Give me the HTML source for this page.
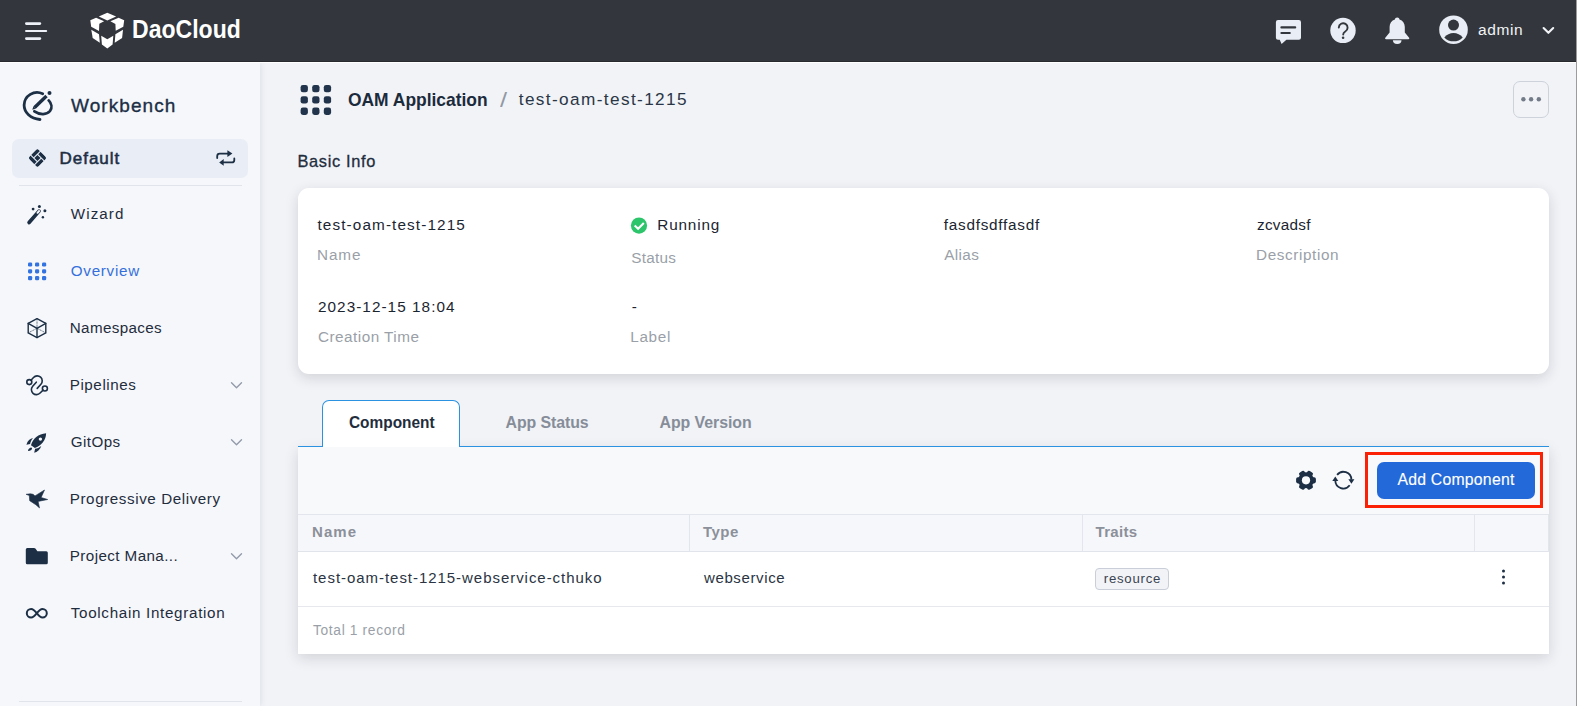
<!DOCTYPE html>
<html lang="en">
<head>
<meta charset="utf-8">
<title>OAM Application - test-oam-test-1215</title>
<style>
*{box-sizing:border-box;margin:0;padding:0}
html,body{width:1577px;height:706px;overflow:hidden;background:#f1f3f7;font-family:"Liberation Sans",sans-serif;color:#1f2d3d}
.a{position:absolute}
.t{position:absolute;white-space:nowrap;line-height:1;z-index:5}
svg{position:absolute;left:0;top:0;overflow:visible;z-index:4}
#topbar{left:0;top:0;width:1577px;height:62px;background:#33363c;border-bottom:1px solid #27292e;z-index:3}
#topline{left:0;top:62px;width:1577px;height:1px;background:#fff;z-index:3}
#sidebar{left:0;top:63px;width:260px;height:643px;background:#f6f7fb;box-shadow:1px 0 6px rgba(50,60,80,.10);z-index:2}
#main{left:260px;top:61px;width:1317px;height:645px;background:#f1f3f7;z-index:1}
#edge{left:1576px;top:0;width:1px;height:706px;background:#9c9c9e;z-index:9}
#defbox{left:12px;top:139px;width:236px;height:39px;border-radius:7px;background:#e9edf5;z-index:3}
.hr{height:1px;background:#e1e4ea;left:19px;width:223px;z-index:3}
#more{left:1513px;top:81px;width:36px;height:37px;border:1px solid #cdd2db;border-radius:7px;background:#f1f3f7;z-index:3}
#card{left:298px;top:188px;width:1251px;height:186px;border-radius:11px;background:#fff;box-shadow:0 4px 13px rgba(25,30,40,.15);z-index:2}
#panel{left:298px;top:447px;width:1251px;height:207px;background:#fff;box-shadow:0 4px 13px rgba(25,30,40,.15);z-index:2}
#toolbar{left:298px;top:447px;width:1251px;height:67px;background:#f8f9fb;z-index:3}
#thead{left:298px;top:514px;width:1251px;height:38px;background:#f6f7fa;border-top:1px solid #e3e6ec;border-bottom:1px solid #e1e4ea;border-right:1px solid #e3e6ec;z-index:3}
.vd{top:515px;width:1px;height:36px;background:#e3e6ec;z-index:4}
#rowline{left:298px;top:606px;width:1251px;height:1px;background:#e6e8ed;z-index:3}
#tabline{left:298px;top:446px;width:1251px;height:1px;background:#2a92e1;z-index:3}
#tab{left:322px;top:400px;width:138px;height:47px;border:1px solid #2a92e1;border-bottom:none;border-radius:7px 7px 0 0;background:#fff;z-index:4}
#redbox{left:1365px;top:452px;width:178px;height:56px;border:3px solid #fb2104;z-index:4}
#btn{left:1377px;top:462px;width:158px;height:37px;border-radius:7px;background:#2369d9;z-index:4}
#tagbox{left:1095px;top:568px;width:74px;height:22px;border:1px solid #c9ced8;border-radius:4px;background:#f1f3f7;z-index:3}
</style>
</head>
<body>
<div class="a" id="main"></div>
<div class="a" id="sidebar"></div>
<div class="a" id="topbar"></div>
<div class="a" id="topline"></div>
<div class="a" id="edge"></div>

<div class="a" id="defbox"></div>
<div class="a hr" style="top:185px"></div>
<div class="a hr" style="top:701px"></div>

<div class="a" id="more"></div>
<div class="a" id="card"></div>
<div class="a" id="panel"></div>
<div class="a" id="toolbar"></div>
<div class="a" id="thead"></div>
<div class="a vd" style="left:689px"></div>
<div class="a vd" style="left:1082px"></div>
<div class="a vd" style="left:1474px"></div>
<div class="a" id="rowline"></div>
<div class="a" id="tabline"></div>
<div class="a" id="tab"></div>
<div class="a" id="redbox"></div>
<div class="a" id="btn"></div>
<div class="a" id="tagbox"></div>

<span class="t" id="t-logo" style="left:132.90px;top:16.02px;font-size:26px;color:#ffffff;transform-origin:0 0;transform:translateX(-0.89px) scaleX(0.8852);font-weight:bold;">DaoCloud</span>
<span class="t" id="t-admin" style="left:1477.90px;top:21.77px;font-size:15.5px;color:#f1f3f7;letter-spacing:0.626px;">admin</span>
<span class="t" id="t-wb" style="left:71.03px;top:96.02px;font-size:19px;color:#1c2f45;letter-spacing:1.063px;-webkit-text-stroke:0.35px #1c2f45;">Workbench</span>
<span class="t" id="t-def" style="left:59.44px;top:150.02px;font-size:17px;color:#1c2f45;letter-spacing:0.997px;-webkit-text-stroke:0.55px #1c2f45;">Default</span>
<span class="t" id="t-m1" style="left:70.75px;top:205.92px;font-size:15.2px;color:#1f2d3d;letter-spacing:1.089px;">Wizard</span>
<span class="t" id="t-m2" style="left:70.75px;top:262.92px;font-size:15.2px;color:#356fdb;letter-spacing:0.739px;">Overview</span>
<span class="t" id="t-m3" style="left:69.75px;top:319.92px;font-size:15.2px;color:#1f2d3d;letter-spacing:0.357px;">Namespaces</span>
<span class="t" id="t-m4" style="left:69.75px;top:376.92px;font-size:15.2px;color:#1f2d3d;letter-spacing:0.558px;">Pipelines</span>
<span class="t" id="t-m5" style="left:70.75px;top:433.92px;font-size:15.2px;color:#1f2d3d;letter-spacing:0.417px;">GitOps</span>
<span class="t" id="t-m6" style="left:69.75px;top:490.92px;font-size:15.2px;color:#1f2d3d;letter-spacing:0.583px;">Progressive Delivery</span>
<span class="t" id="t-m7" style="left:69.75px;top:547.92px;font-size:15.2px;color:#1f2d3d;letter-spacing:0.417px;">Project Mana...</span>
<span class="t" id="t-m8" style="left:70.75px;top:604.92px;font-size:15.2px;color:#1f2d3d;letter-spacing:0.689px;">Toolchain Integration</span>
<span class="t" id="t-bc1" style="left:347.50px;top:91.27px;font-size:18.5px;color:#1c2b3c;transform-origin:0 0;transform:translateX(0.00px) scaleX(0.9414);font-weight:bold;">OAM Application</span>
<span class="t" id="t-bc2" style="left:500.00px;top:90.02px;font-size:20px;color:#9299a5;transform-origin:0 0;transform:translateX(0.00px) scaleX(1.2667);">/</span>
<span class="t" id="t-bc3" style="left:518.75px;top:91.42px;font-size:17.2px;color:#2a3646;letter-spacing:1.386px;">test-oam-test-1215</span>
<span class="t" id="t-bi" style="left:297.49px;top:152.82px;font-size:16.4px;color:#1f2d3d;letter-spacing:0.657px;-webkit-text-stroke:0.3px #1f2d3d;">Basic Info</span>
<span class="t" id="t-v1" style="left:317.50px;top:216.87px;font-size:15.3px;color:#1b2530;letter-spacing:1.110px;">test-oam-test-1215</span>
<span class="t" id="t-l1" style="left:317.00px;top:246.87px;font-size:15.3px;color:#9a9fa8;letter-spacing:0.901px;">Name</span>
<span class="t" id="t-v2" style="left:657.25px;top:216.87px;font-size:15.3px;color:#1b2530;letter-spacing:0.837px;">Running</span>
<span class="t" id="t-l2" style="left:631.25px;top:249.87px;font-size:15.3px;color:#9a9fa8;letter-spacing:0.256px;">Status</span>
<span class="t" id="t-v3" style="left:943.75px;top:216.87px;font-size:15.3px;color:#1b2530;letter-spacing:0.754px;">fasdfsdffasdf</span>
<span class="t" id="t-l3" style="left:944.25px;top:246.87px;font-size:15.3px;color:#9a9fa8;letter-spacing:0.373px;">Alias</span>
<span class="t" id="t-v4" style="left:1257.00px;top:216.87px;font-size:15.3px;color:#1b2530;letter-spacing:0.265px;">zcvadsf</span>
<span class="t" id="t-l4" style="left:1256.00px;top:246.87px;font-size:15.3px;color:#9a9fa8;letter-spacing:0.599px;">Description</span>
<span class="t" id="t-v5" style="left:318.00px;top:298.87px;font-size:15.3px;color:#1b2530;letter-spacing:1.049px;">2023-12-15 18:04</span>
<span class="t" id="t-l5" style="left:318.00px;top:328.87px;font-size:15.3px;color:#9a9fa8;letter-spacing:0.480px;">Creation Time</span>
<span class="t" id="t-v6" style="left:631.75px;top:298.87px;font-size:15.3px;color:#1b2530;">-</span>
<span class="t" id="t-l6" style="left:630.25px;top:328.87px;font-size:15.3px;color:#9a9fa8;letter-spacing:0.680px;">Label</span>
<span class="t" id="t-tab1" style="left:348.75px;top:414.57px;font-size:15.9px;color:#1f2d3d;transform-origin:0 0;transform:translateX(0.00px) scaleX(0.9694);font-weight:bold;">Component</span>
<span class="t" id="t-tab2" style="left:505.50px;top:414.57px;font-size:15.9px;color:#868d99;font-weight:bold;letter-spacing:-0.087px;">App Status</span>
<span class="t" id="t-tab3" style="left:659.50px;top:414.57px;font-size:15.9px;color:#868d99;font-weight:bold;letter-spacing:-0.051px;">App Version</span>
<span class="t" id="t-btn" style="left:1397.40px;top:471.62px;font-size:15.8px;color:#ffffff;letter-spacing:0.228px;-webkit-text-stroke:0.12px #ffffff;">Add Component</span>
<span class="t" id="t-h1" style="left:312.00px;top:524.02px;font-size:15px;color:#8b909a;font-weight:bold;letter-spacing:1.079px;">Name</span>
<span class="t" id="t-h2" style="left:703.00px;top:524.02px;font-size:15px;color:#8b909a;font-weight:bold;letter-spacing:0.482px;">Type</span>
<span class="t" id="t-h3" style="left:1095.50px;top:524.02px;font-size:15px;color:#8b909a;font-weight:bold;letter-spacing:0.315px;">Traits</span>
<span class="t" id="t-c1" style="left:313.00px;top:570.02px;font-size:15px;color:#2a3442;letter-spacing:0.957px;">test-oam-test-1215-webservice-cthuko</span>
<span class="t" id="t-c2" style="left:704.00px;top:570.02px;font-size:15px;color:#2a3442;letter-spacing:0.618px;">webservice</span>
<span class="t" id="t-tag" style="left:1103.75px;top:571.92px;font-size:13.2px;color:#3a4350;letter-spacing:0.754px;">resource</span>
<span class="t" id="t-tot" style="left:313.00px;top:623.62px;font-size:13.8px;color:#9a9fa8;letter-spacing:0.641px;">Total 1 record</span>

<svg width="1577" height="706" viewBox="0 0 1577 706">
<!-- hamburger -->
<g fill="#eef1f7">
<rect x="25" y="22.2" width="16.2" height="2.7" rx="1.35"/>
<rect x="25" y="29.9" width="22.2" height="2.2" rx="1.1"/>
<rect x="25" y="37.2" width="16.2" height="2.7" rx="1.35"/>
</g>
<!-- logo cube -->
<g fill="#ffffff">
<polygon points="107.3,12.7 116.1,16.6 107.3,20.5 98.8,16.6"/>
<polygon points="90.3,20.2 96.1,17.7 104.1,21.2 99.3,23.8 99,30.9 91.2,26.7"/>
<polygon points="124.2,20.2 118.6,17.7 110.4,21.2 115.4,24.1 115.7,30.8 123.3,26.7"/>
<polygon points="91.3,29.7 99,34.3 99.8,42.8 92.7,37.9"/>
<polygon points="123,29.7 115.4,34.3 114.7,42.8 122.1,37.9"/>
<polygon points="101.2,35.7 107.3,39.3 113.3,35.7 112.6,44.6 107.3,48.5 101.9,44.6"/>
</g>
<!-- chat -->
<g>
<path d="M1278 20.1h20.9a2.1 2.1 0 0 1 2.1 2.1v15.5a2.1 2.1 0 0 1-2.1 2.1h-12.5l-4.8 4.1-1.9-4.1h-1.7a2.1 2.1 0 0 1-2.1-2.1v-15.5a2.1 2.1 0 0 1 2.1-2.1z" fill="#e9edf5"/>
<path d="M1281.4 27.4h13.8M1281.4 33h8.4" stroke="#33363c" stroke-width="2.1" stroke-linecap="round" fill="none"/>
</g>
<!-- help -->
<circle cx="1343" cy="30.4" r="12.7" fill="#e9edf5"/>
<path d="M1338.800 27.500a4.400 4.400 0 1 1 6.500 4c-1.500 .900-2.100 1.600-2.100 3" stroke="#33363c" stroke-width="1.9" stroke-linecap="round" fill="none"/>
<circle cx="1343.1" cy="37.8" r="1.3" fill="#33363c"/>
<!-- bell -->
<path d="M1397.2 17.5c1.3 0 2.2 .9 2.3 2 3.300 1 5.300 3.800 5.300 7.500v5.600l4.300 5.200c.5 .6 .1 1.500-.7 1.500h-22.400c-.8 0-1.200-.9-.7-1.500l4.300-5.200v-5.600c0-3.700 2-6.500 5.300-7.500 .1-1.100 1-2 2.300-2z" fill="#e9edf5"/>
<path d="M1392.900 40.300h8.600a4.300 3.700 0 0 1-8.600 0z" fill="#e9edf5"/>
<!-- avatar -->
<circle cx="1453.5" cy="29.7" r="14.3" fill="#e9edf5"/>
<circle cx="1453.5" cy="25.1" r="5.5" fill="#33363c"/>
<path d="M1444.3 37.400c4.500-6 14-6 18.400 0-4.400 5.200-13.900 5.200-18.400 0z" fill="#33363c"/>
<!-- top chevron -->
<path d="M1543.600 28l4.800 4.800 4.800-4.800" stroke="#f1f3f7" stroke-width="2.1" fill="none" stroke-linecap="round" stroke-linejoin="round"/>

<!-- workbench -->
<g stroke="#1c2f45" stroke-width="2.800" fill="none" stroke-linecap="round">
<path d="M42.700 93.700A13 13 0 0 0 24.100 105.100C24.100 112.500 30.500 118.800 40 119.500"/>
<path d="M48.700 100.400C51.600 103.400 52.400 107.800 50 111C47 114.800 40 115.200 34.400 111.300"/>
<path d="M46.500 96.100L34.600 107.400" stroke-width="3.400" stroke-linecap="butt"/>
</g>
<polygon points="35.800,108.600 33.400,106.200 32.300,109.700" fill="#1c2f45"/>
<circle cx="49.500" cy="93.100" r="2" fill="#1c2f45"/>
<!-- default diamond -->
<clipPath id="dcl"><rect x="-6.750" y="-6.750" width="13.500" height="13.500" rx="2.600"/></clipPath>
<g transform="translate(37.450 158) rotate(45)" fill="#1c2f45"><g clip-path="url(#dcl)">
<rect x="-2.150" y="-6.750" width="8.900" height="3.500"/>
<rect x="3.250" y="-2.150" width="3.500" height="8.900"/>
<rect x="-6.750" y="3.250" width="8.900" height="3.500"/>
<rect x="-6.750" y="-6.750" width="3.500" height="8.900"/>
<rect x="-2.150" y="-2.150" width="4.300" height="4.300"/>
</g></g>
<!-- swap -->
<g stroke="#1c2f45" stroke-width="1.800" fill="none" stroke-linecap="round">
<path d="M217.200 158v-1.800a2.500 2.500 0 0 1 2.500-2.500h8.500"/>
<path d="M234.300 158.400v1.500a2.500 2.500 0 0 1-2.500 2.500h-8.500"/>
</g>
<polygon points="227.400,150.200 232.400,153.600 227.400,157.100" fill="#1c2f45"/>
<polygon points="223.700,159 219.200,162.400 223.700,165.800" fill="#1c2f45"/>

<!-- wizard -->
<path d="M29.100 222.500L39 211.100" stroke="#1c2f45" stroke-width="3.700" stroke-linecap="round"/>
<path d="M37.500 212.800L39.100 211" stroke="#f6f7fb" stroke-width="2" stroke-linecap="round"/>
<g fill="#1c2f45">
<circle cx="33.100" cy="209.100" r="1.400"/><circle cx="39.400" cy="206.400" r="1.500"/><circle cx="44.900" cy="210.700" r="1.500"/><circle cx="42.900" cy="217.300" r="1.200"/>
</g>
<!-- overview dots -->
<g fill="#3273e1">
<rect x="28" y="262.400" width="4.200" height="4.200" rx="1.300"/><rect x="35" y="262.400" width="4.200" height="4.200" rx="1.300"/><rect x="42" y="262.400" width="4.200" height="4.200" rx="1.300"/>
<rect x="28" y="269.200" width="4.200" height="4.200" rx="1.300"/><rect x="35" y="269.200" width="4.200" height="4.200" rx="1.300"/><rect x="42" y="269.200" width="4.200" height="4.200" rx="1.300"/>
<rect x="28" y="276" width="4.200" height="4.200" rx="1.300"/><rect x="35" y="276" width="4.200" height="4.200" rx="1.300"/><rect x="42" y="276" width="4.200" height="4.200" rx="1.300"/>
</g>
<!-- namespaces cube -->
<g stroke="#1c2f45" stroke-width="1.400" fill="none" stroke-linejoin="round" stroke-linecap="round">
<polygon points="37,318.600 45.800,323.300 45.800,332.900 37,337.600 28.200,332.900 28.200,323.300"/>
<path d="M28.200 323.300L37 328.300L45.800 323.300M37 328.300V337.600"/>
<path d="M37 318.600V328.300M37 328.300L28.200 332.900M37 328.300L45.800 332.900" stroke-width="1" stroke-dasharray="1.600 1.600" opacity=".6"/>
</g>
<!-- pipelines -->
<g stroke="#1c2f45" stroke-width="1.600" fill="none" stroke-linecap="round">
<circle cx="29.300" cy="382.100" r="2.500"/>
<circle cx="44.900" cy="388.500" r="2.500"/>
<path d="M31 380.200L33.500 377.500A5 5 0 0 1 40.900 384.300L37.200 388.400"/>
<path d="M36.300 382.200L32.700 386.200A5 5 0 0 0 40.100 393L43.100 390.200"/>
</g>
<!-- gitops rocket -->
<g fill="#1c2f45">
<path d="M46.100 433.200C38.500 433.700 32.500 438.800 31 445.200L34.900 448C41 445.500 46 440.500 46.100 433.200z"/>
<path d="M26.400 444.700C27.400 441 30.200 438.500 33 438.100C31.300 440.200 30.500 442.200 30.100 444.100z"/>
<path d="M34.200 452.700C37.200 451.900 40.100 449.700 41.300 445.900C39.300 447.600 37.200 448.400 35.100 448.700z"/>
<path d="M31.400 447.500C29.800 447.600 28.400 448.700 28 450.700C29.900 451.300 31.500 450.300 32.100 448.600z"/>
</g>
<circle cx="40.400" cy="439.100" r="1.700" fill="#f6f7fb"/>
<!-- bird -->
<polygon points="26.100,494.300 30.400,493.800 33.100,494.300 35,495.900 44.500,490 41.100,497.500 47.700,499.500 38.100,501.400 39.500,507.900 35.900,504.800 29.700,500.700 29.300,495.500" fill="#1c2f45" stroke="#1c2f45" stroke-width=".6" stroke-linejoin="round"/>
<!-- folder -->
<path d="M27.300 547.900h6.700c.6 0 1.100 .3 1.400 .7l2 2.600h8.900a1.500 1.500 0 0 1 1.500 1.500v10a1.500 1.500 0 0 1-1.500 1.500h-19a1.500 1.500 0 0 1-1.500-1.500v-13.300a1.500 1.500 0 0 1 1.500-1.500z" fill="#1c2f45"/>
<!-- infinity -->
<path d="M36.800 613.200C34.800 610.500 33.300 608.900 31.100 608.900A4.300 4.300 0 0 0 31.100 617.500C33.300 617.500 34.800 615.900 36.800 613.200C38.800 610.500 40.300 608.900 42.500 608.900A4.300 4.300 0 0 1 42.500 617.500C40.300 617.500 38.800 615.900 36.800 613.200z" stroke="#1c2f45" stroke-width="2" fill="none"/>
<!-- sidebar chevrons -->
<g stroke="#929baa" stroke-width="1.350" fill="none" stroke-linecap="round" stroke-linejoin="round">
<path d="M231.500 382.800l5 5 5-5"/><path d="M231.500 439.800l5 5 5-5"/><path d="M231.500 553.800l5 5 5-5"/>
</g>

<!-- breadcrumb 9 dots -->
<g fill="#22344b">
<rect x="300.600" y="85" width="7.300" height="7.300" rx="2.300"/><rect x="312.200" y="85" width="7.300" height="7.300" rx="2.300"/><rect x="323.800" y="85" width="7.300" height="7.300" rx="2.300"/>
<rect x="300.600" y="96.300" width="7.300" height="7.300" rx="2.300"/><rect x="312.200" y="96.300" width="7.300" height="7.300" rx="2.300"/><rect x="323.800" y="96.300" width="7.300" height="7.300" rx="2.300"/>
<rect x="300.600" y="107.600" width="7.300" height="7.300" rx="2.300"/><rect x="312.200" y="107.600" width="7.300" height="7.300" rx="2.300"/><rect x="323.800" y="107.600" width="7.300" height="7.300" rx="2.300"/>
</g>
<!-- more dots -->
<g fill="#737b89"><circle cx="1523.400" cy="99.300" r="2.200"/><circle cx="1531.100" cy="99.300" r="2.200"/><circle cx="1538.800" cy="99.300" r="2.200"/></g>
<!-- status check -->
<circle cx="639" cy="225.600" r="8.100" fill="#2dc56b"/>
<path d="M634.700 225.600L638.100 228.800L643.800 223.100" stroke="#fff" stroke-width="2.100" fill="none"/>
<!-- gear -->
<g transform="translate(1306 480.300)">
<path d="M0 0" />
<g fill="#1c2f45">
<circle r="8"/>
<rect x="-3.100" y="-9.900" width="6.200" height="19.800" rx="1.800" transform="rotate(30)"/>
<rect x="-3.100" y="-9.900" width="6.200" height="19.800" rx="1.800" transform="rotate(90)"/>
<rect x="-3.100" y="-9.900" width="6.200" height="19.800" rx="1.800" transform="rotate(150)"/>
</g>
<circle r="4.100" fill="#f8f9fb"/>
</g>
<!-- refresh -->
<g stroke="#1c2f45" stroke-width="1.800" fill="none">
<path d="M1337.100 474.900A8 8 0 0 1 1351.400 479.600"/>
<path d="M1349.700 485.300A8 8 0 0 1 1335.300 480.600"/>
</g>
<polygon points="1348.400,479.300 1354.400,479.300 1351.400,483.800" fill="#1c2f45"/>
<polygon points="1332.300,480.900 1338.300,480.900 1335.300,476.600" fill="#1c2f45"/>
<!-- row dots -->
<g fill="#1c2f45"><circle cx="1503.500" cy="571" r="1.500"/><circle cx="1503.500" cy="577" r="1.500"/><circle cx="1503.500" cy="583" r="1.500"/></g>

</svg>
</body>
</html>
